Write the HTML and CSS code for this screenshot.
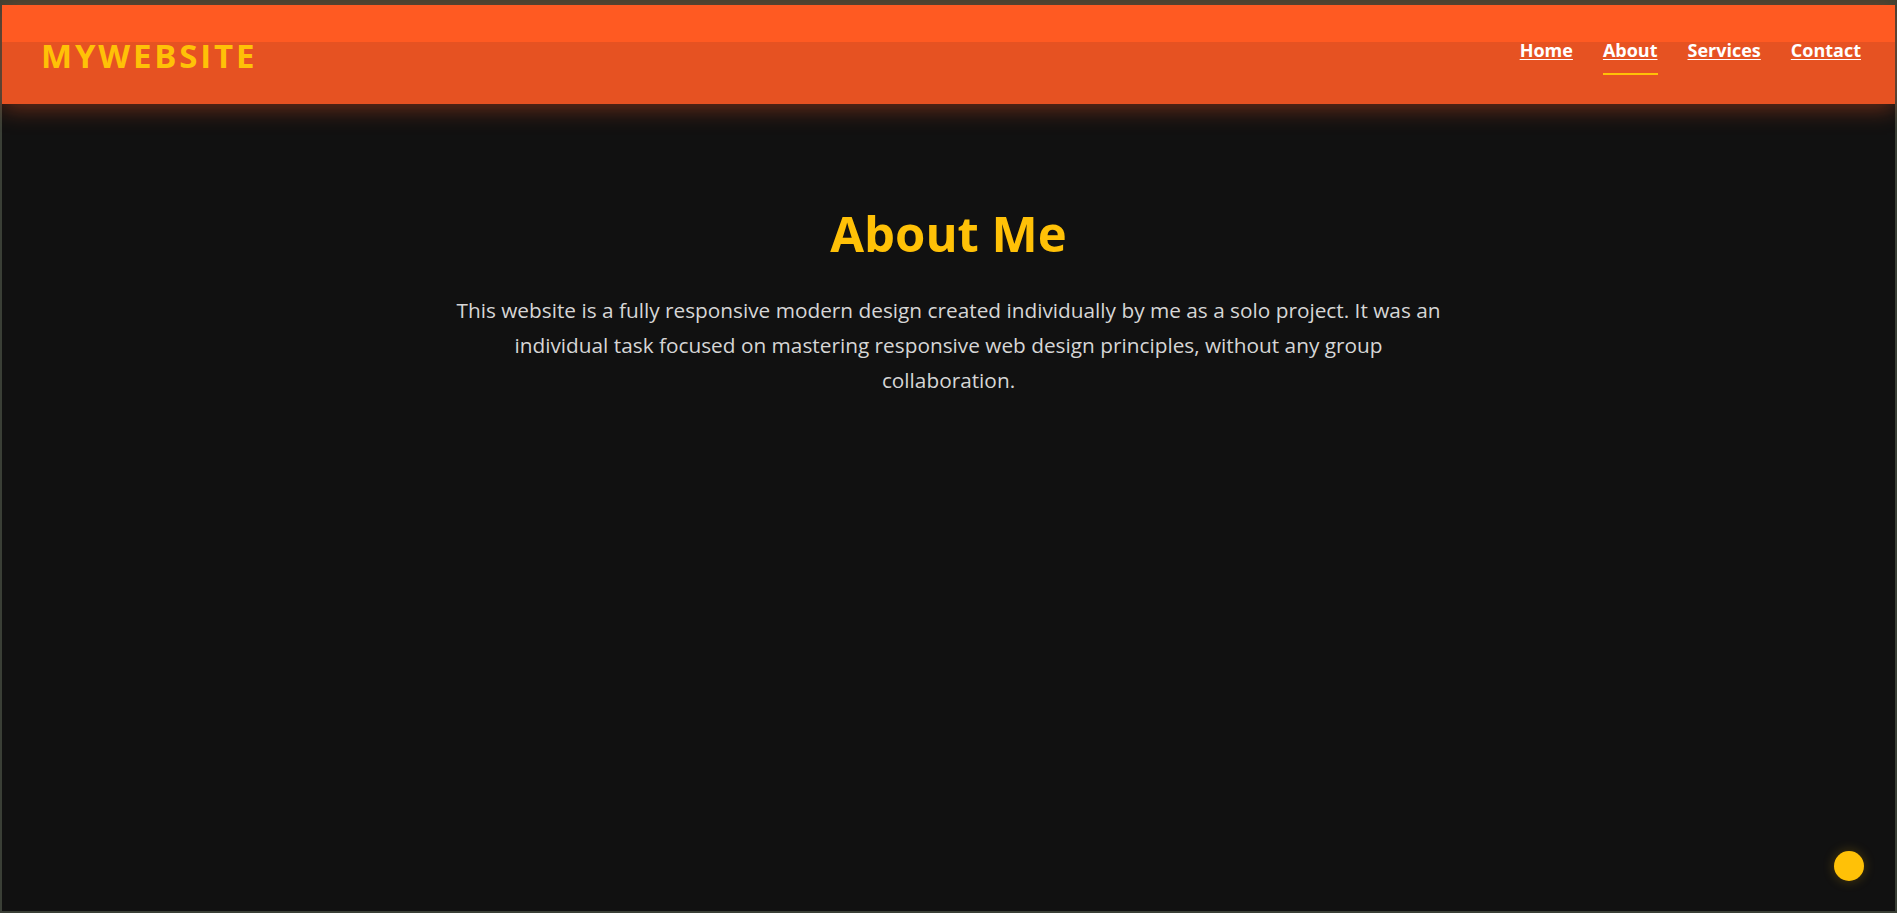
FILE: index.html
```html
<!DOCTYPE html>
<html lang="en">
<head>
<meta charset="utf-8">
<title>MyWebsite - About</title>
<link rel="stylesheet" href="styles.css">
</head>
<body>
<div class="frame">
  <header class="site-header">
    <div class="logo">MYWEBSITE</div>
    <nav class="nav">
      <a href="#" class="nav-link">Home</a>
      <a href="#" class="nav-link active">About</a>
      <a href="#" class="nav-link">Services</a>
      <a href="#" class="nav-link">Contact</a>
    </nav>
  </header>
  <main class="about">
    <h1 class="about-title">About Me</h1>
    <p class="about-text">This website is a fully responsive modern design created individually by me as a solo project. It was an individual task focused on mastering responsive web design principles, without any group collaboration.</p>
  </main>
  <div class="dot"></div>
</div>
</body>
</html>
```

FILE: styles.css
```css
* { box-sizing: border-box; }
html, body { margin: 0; padding: 0; height: 100%; }
body {
  background: #111111;
  font-family: "Open Sans", "Noto Sans", sans-serif;
  overflow: hidden;
}
.frame {
  position: relative;
  height: 913px;
  border-top: 5px solid #3a4133;
  border-left: 2px solid #3a3f36;
  border-right: 2px solid #3a3f36;
  border-bottom: 2px solid #3a3f36;
  background: #111111;
}
.site-header {
  height: 99px;
  display: flex;
  align-items: center;
  justify-content: space-between;
  padding: 0 34px 0 39px;
  background: linear-gradient(#ff5a22 0, #ff5a22 37px, #e65222 37px, #e65222 100%);
  box-shadow: 0 4px 22px rgba(230, 82, 34, 0.45);
  position: relative;
  z-index: 1;
}
.logo {
  color: #ffc107;
  font-weight: 700;
  font-size: 33px;
  letter-spacing: 2.8px;
  margin-top: 2px;
}
.nav {
  display: flex;
  gap: 30px;
  align-items: flex-start;
}
.nav-link {
  color: #ffffff;
  font-weight: 700;
  font-size: 18px;
  text-decoration: underline;
  text-underline-offset: 2px;
  position: relative;
  padding-bottom: 13px;
  margin-top: 3px;
}
.nav-link.active::after {
  content: "";
  position: absolute;
  left: 0;
  right: 0;
  bottom: 0;
  height: 2px;
  background: #ffc107;
}
.about {
  text-align: center;
  padding-top: 100px;
}
.about-title {
  margin: 0 0 30px;
  color: #ffc107;
  font-weight: 700;
  font-size: 49px;
  line-height: 1.2;
}
.about-text {
  margin: 0 auto;
  max-width: 995px;
  color: #d6d6d6;
  font-size: 20.8px;
  line-height: 35px;
}
.dot {
  position: absolute;
  right: 31px;
  bottom: 30px;
  width: 30px;
  height: 30px;
  border-radius: 50%;
  background: #ffc107;
  box-shadow: 0 0 12px rgba(255, 193, 7, 0.25);
}
```
